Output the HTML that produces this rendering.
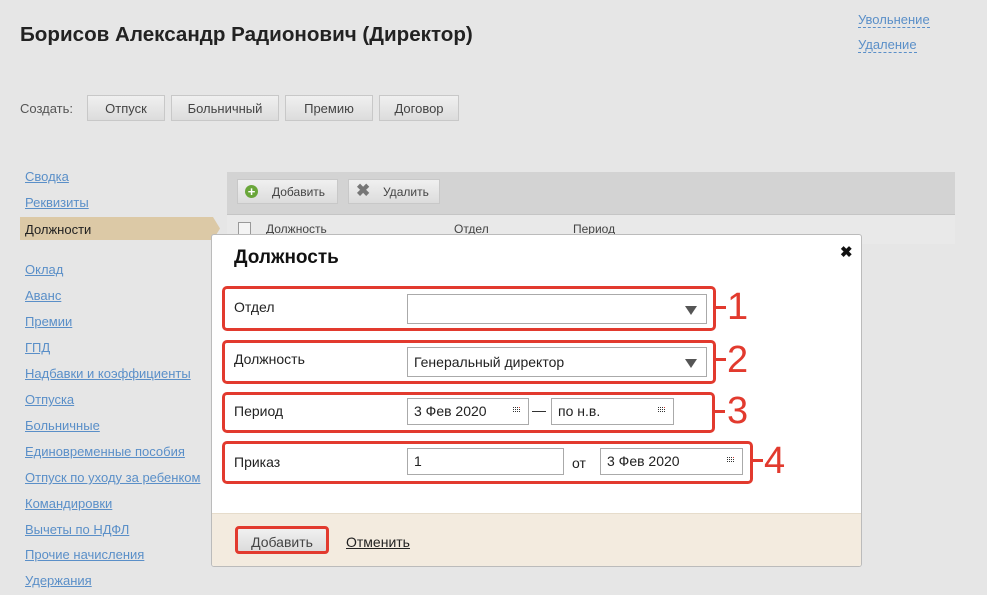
<!DOCTYPE html>
<html><head><meta charset="utf-8"><style>
body{margin:0;width:987px;height:595px;background:#e6e6e6;font-family:"Liberation Sans",sans-serif;position:relative;overflow:hidden;color:#222}
.a{position:absolute}
h1{position:absolute;left:20px;top:23px;margin:0;font-size:20.6px;font-weight:bold;color:#222}
.tl{position:absolute;left:858px;font-size:13px;color:#5a8fc8;border-bottom:1px dashed #5a8fc8;line-height:15px}
.btn{position:absolute;top:95px;height:26px;border:1px solid #c8c8c8;background:linear-gradient(#f0f0f0,#dcdcdc);font-size:13px;color:#444;text-align:center;line-height:26px;box-sizing:border-box}
.nav{position:absolute;left:25px;font-size:13px;color:#5a8fc8;text-decoration:underline}
.lbl{position:absolute;font-size:14px;color:#222}
.inp{position:absolute;border:1px solid #aaa;background:#fff;box-sizing:border-box;font-size:14px;line-height:28px;padding-left:6px;color:#222}
.red{position:absolute;border:3px solid #e23a2e;border-radius:5px;box-sizing:border-box}
.num{position:absolute;font-size:38px;color:#e23a2e;line-height:38px}
.dash{position:absolute;height:3px;width:10px;background:#e23a2e}
.cal{position:absolute;right:8px;top:8px}
.tri{position:absolute;right:9px;top:11px;width:0;height:0;border-left:6px solid transparent;border-right:6px solid transparent;border-top:9px solid #555}
</style></head><body>
<svg width="0" height="0" style="position:absolute"><defs><g id="c"><g fill="#333"><rect x="0" y="0" width="1" height="1"/><rect x="2" y="0" width="1" height="1"/><rect x="4" y="0" width="1" height="1"/><rect x="0" y="2" width="1" height="1"/><rect x="2" y="2" width="1" height="1"/><rect x="4" y="2" width="1" height="1"/><rect x="0" y="4" width="1" height="1"/><rect x="2" y="4" width="1" height="1"/><rect x="4" y="4" width="1" height="1"/><rect x="6" y="2" width="1" height="1"/><rect x="6" y="4" width="1" height="1"/></g><rect x="6" y="0" width="1" height="1" fill="#e23a2e"/></g></defs></svg>
<h1>Борисов Александр Радионович (Директор)</h1>
<div class="tl" style="top:12px">Увольнение</div>
<div class="tl" style="top:37px">Удаление</div>
<div class="a" style="left:20px;top:101px;font-size:13px;color:#555">Создать:</div>
<div class="btn" style="left:87px;width:78px">Отпуск</div>
<div class="btn" style="left:171px;width:108px">Больничный</div>
<div class="btn" style="left:285px;width:88px">Премию</div>
<div class="btn" style="left:379px;width:80px">Договор</div>

<div class="nav" style="top:169px">Сводка</div>
<div class="nav" style="top:195px">Реквизиты</div>
<div class="a" style="left:20px;top:217px;width:200px;height:23px;background:#dcc9a6;clip-path:polygon(0 0,193px 0,200px 50%,193px 100%,0 100%)"></div>
<div class="a" style="left:25px;top:222px;font-size:13px;color:#222">Должности</div>
<div class="nav" style="top:262px">Оклад</div>
<div class="nav" style="top:288px">Аванс</div>
<div class="nav" style="top:314px">Премии</div>
<div class="nav" style="top:340px">ГПД</div>
<div class="nav" style="top:366px">Надбавки и коэффициенты</div>
<div class="nav" style="top:392px">Отпуска</div>
<div class="nav" style="top:418px">Больничные</div>
<div class="nav" style="top:444px">Единовременные пособия</div>
<div class="nav" style="top:470px">Отпуск по уходу за ребенком</div>
<div class="nav" style="top:496px">Командировки</div>
<div class="nav" style="top:522px">Вычеты по НДФЛ</div>
<div class="nav" style="top:547px">Прочие начисления</div>
<div class="nav" style="top:573px">Удержания</div>

<div class="a" style="left:227px;top:172px;width:728px;height:42px;background:#d3d3d3"></div>
<div class="a" style="left:227px;top:214px;width:728px;height:29px;background:#e9e9e9;border-top:1px solid #c5c5c5"></div>
<div class="btn" style="left:237px;top:179px;width:101px;height:25px;line-height:24px;font-size:12px;text-align:left;padding-left:34px">Добавить</div>
<div class="a" style="left:245px;top:185px;width:13px;height:13px;border-radius:50%;background:#6aa63a;color:#fff;font-size:13px;font-weight:bold;line-height:13px;text-align:center">+</div>
<div class="btn" style="left:348px;top:179px;width:92px;height:25px;line-height:24px;font-size:12px;text-align:left;padding-left:34px">Удалить</div>
<div class="a" style="left:356px;top:181px;font-size:17px;color:#777;font-weight:bold">✖</div>
<div class="a" style="left:238px;top:222px;width:11px;height:11px;border:1px solid #999;background:#f4f4f4"></div>
<div class="a" style="left:266px;top:222px;font-size:12px;color:#444">Должность</div>
<div class="a" style="left:454px;top:222px;font-size:12px;color:#444">Отдел</div>
<div class="a" style="left:573px;top:222px;font-size:12px;color:#444">Период</div>

<div class="a" style="left:211px;top:234px;width:651px;height:333px;background:#fff;border:1px solid #bbb;border-radius:3px;box-sizing:border-box;overflow:hidden">
<div class="a" style="left:0;top:278px;width:651px;height:60px;background:#f3ebdf;border-top:1px solid #e6dccb"></div>
</div>
<div class="a" style="left:234px;top:247px;font-size:19px;font-weight:bold;color:#111">Должность</div>
<div class="a" style="left:840px;top:243px;font-size:15px;font-weight:bold;color:#111">✖</div>

<div class="lbl" style="left:234px;top:299px">Отдел</div>
<div class="inp" style="left:407px;top:294px;width:300px;height:30px"><span class="tri"></span></div>
<div class="red" style="left:222px;top:286px;width:494px;height:45px"></div>
<div class="dash" style="left:716px;top:306px"></div><div class="num" style="left:727px;top:288px">1</div>

<div class="lbl" style="left:234px;top:351px">Должность</div>
<div class="inp" style="left:407px;top:347px;width:300px;height:30px">Генеральный директор<span class="tri"></span></div>
<div class="red" style="left:222px;top:340px;width:494px;height:44px"></div>
<div class="dash" style="left:716px;top:358px"></div><div class="num" style="left:727px;top:341px">2</div>

<div class="lbl" style="left:234px;top:403px">Период</div>
<div class="inp" style="left:407px;top:398px;width:122px;height:27px;line-height:25px">3 Фев 2020<svg class="cal" width="7" height="5"><use href="#c"/></svg></div>
<div class="a" style="left:532px;top:402px;font-size:14px">—</div>
<div class="inp" style="left:551px;top:398px;width:123px;height:27px;line-height:25px">по н.в.<svg class="cal" width="7" height="5"><use href="#c"/></svg></div>
<div class="red" style="left:222px;top:392px;width:493px;height:41px"></div>
<div class="dash" style="left:715px;top:410px"></div><div class="num" style="left:727px;top:392px">3</div>

<div class="lbl" style="left:234px;top:454px">Приказ</div>
<div class="inp" style="left:407px;top:448px;width:157px;height:27px;line-height:25px">1</div>
<div class="a" style="left:572px;top:455px;font-size:14px">от</div>
<div class="inp" style="left:600px;top:448px;width:143px;height:27px;line-height:25px">3 Фев 2020<svg class="cal" width="7" height="5"><use href="#c"/></svg></div>
<div class="red" style="left:222px;top:441px;width:531px;height:43px"></div>
<div class="dash" style="left:753px;top:459px"></div><div class="num" style="left:764px;top:442px">4</div>

<div class="btn" style="left:235px;top:526px;width:94px;height:28px;font-size:14px;border:3px solid #e23a2e;border-radius:4px;line-height:26px">Добавить</div>
<div class="a" style="left:346px;top:534px;font-size:14px;color:#222;text-decoration:underline">Отменить</div>
</body></html>
